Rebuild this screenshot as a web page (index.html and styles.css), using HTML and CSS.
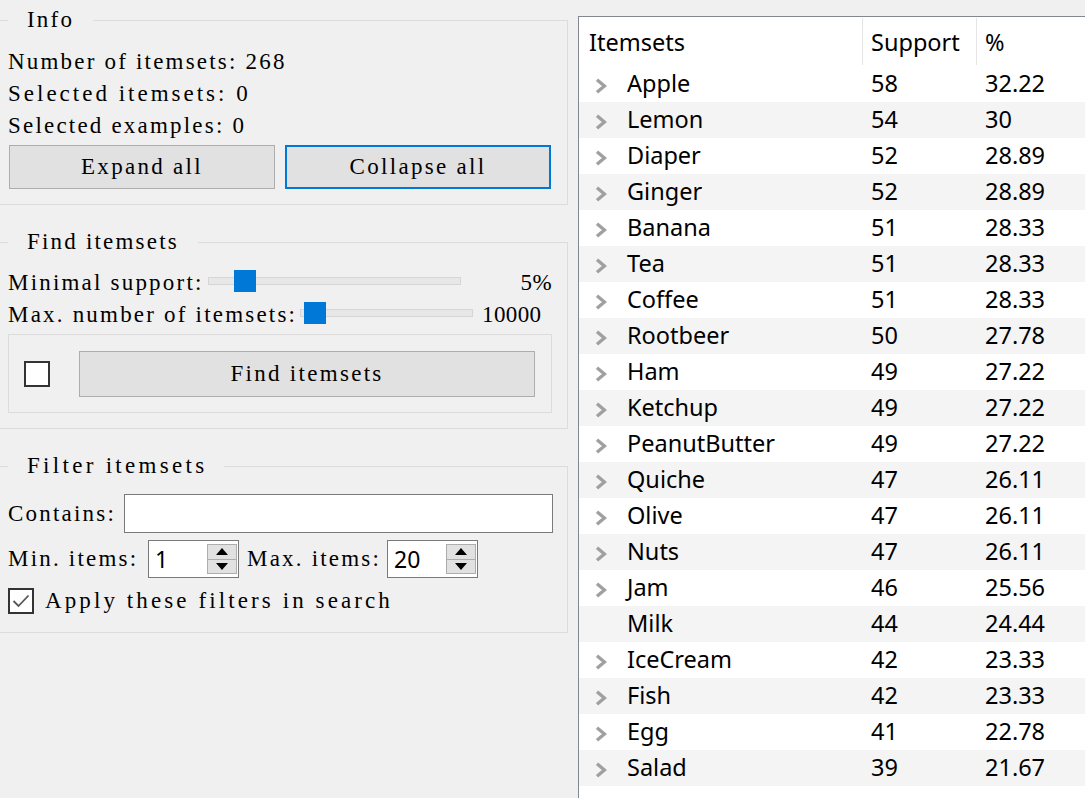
FILE: index.html
```html
<!DOCTYPE html>
<html>
<head>
<meta charset="utf-8">
<link rel="stylesheet" href="styles.css">
</head>
<body>
<div class="app">
  <div class="left">
    <fieldset class="group info">
      <legend>Info</legend>
      <div class="line">Number of itemsets: 268</div>
      <div class="line wide">Selected itemsets: 0</div>
      <div class="line">Selected examples: 0</div>
      <div class="btnrow">
        <button class="btn">Expand all</button>
        <button class="btn focus">Collapse all</button>
      </div>
    </fieldset>

    <fieldset class="group find">
      <legend>Find itemsets</legend>
      <div class="srow">
        <span class="lbl lbl-ms">Minimal support:</span>
        <div class="slider s1"><div class="groove"></div><div class="handle h1"></div></div>
        <span class="spacer"></span>
        <span class="sval">5%</span>
      </div>
      <div class="srow">
        <span class="lbl lbl-mx">Max. number of itemsets:</span>
        <div class="slider s2"><div class="groove"></div><div class="handle h2"></div></div>
        <span class="sval v2">10000</span>
      </div>
      <div class="frame">
        <span class="cb"></span>
        <button class="btn big">Find itemsets</button>
      </div>
    </fieldset>

    <fieldset class="group filter">
      <legend class="wide">Filter itemsets</legend>
      <div class="frow">
        <span class="lbl lbl-ct">Contains:</span>
        <div class="input"></div>
      </div>
      <div class="frow spinrow">
        <span class="lbl lbl-min">Min. items:</span>
        <div class="spin">
          <span class="spinval">1</span>
          <div class="spinbtns">
            <div class="sb up"><svg width="12" height="7" viewBox="0 0 12 7"><path d="M6 0 L12 7 L0 7 Z" fill="#000"/></svg></div>
            <div class="sb down"><svg width="12" height="7" viewBox="0 0 12 7"><path d="M0 0 L12 0 L6 7 Z" fill="#000"/></svg></div>
          </div>
        </div>
        <span class="lbl lbl-max">Max. items:</span>
        <div class="spin">
          <span class="spinval">20</span>
          <div class="spinbtns">
            <div class="sb up"><svg width="12" height="7" viewBox="0 0 12 7"><path d="M6 0 L12 7 L0 7 Z" fill="#000"/></svg></div>
            <div class="sb down"><svg width="12" height="7" viewBox="0 0 12 7"><path d="M0 0 L12 0 L6 7 Z" fill="#000"/></svg></div>
          </div>
        </div>
      </div>
      <div class="frow applyrow">
        <span class="cb checked"><svg width="22" height="22" viewBox="0 0 22 22"><path d="M3.5 11 L8.5 16 L18.5 5.5" fill="none" stroke="#555" stroke-width="1.8"/></svg></span>
        <span class="lbl applytxt">Apply these filters in search</span>
      </div>
    </fieldset>
  </div>

  <div class="right">
    <table class="tree">
      <thead>
        <tr><th class="c1">Itemsets</th><th class="c2">Support</th><th class="c3">%</th></tr>
      </thead>
      <tbody>
        <tr><td class="name"><span class="arr"><svg width="12" height="16" viewBox="0 0 12 16"><path d="M2 1.8 L9.4 8 L2 14.2" fill="none" stroke="#a0a0a0" stroke-width="3.4"/></svg></span>Apple</td><td>58</td><td>32.22</td></tr>
        <tr><td class="name"><span class="arr"><svg width="12" height="16" viewBox="0 0 12 16"><path d="M2 1.8 L9.4 8 L2 14.2" fill="none" stroke="#a0a0a0" stroke-width="3.4"/></svg></span>Lemon</td><td>54</td><td>30</td></tr>
        <tr><td class="name"><span class="arr"><svg width="12" height="16" viewBox="0 0 12 16"><path d="M2 1.8 L9.4 8 L2 14.2" fill="none" stroke="#a0a0a0" stroke-width="3.4"/></svg></span>Diaper</td><td>52</td><td>28.89</td></tr>
        <tr><td class="name"><span class="arr"><svg width="12" height="16" viewBox="0 0 12 16"><path d="M2 1.8 L9.4 8 L2 14.2" fill="none" stroke="#a0a0a0" stroke-width="3.4"/></svg></span>Ginger</td><td>52</td><td>28.89</td></tr>
        <tr><td class="name"><span class="arr"><svg width="12" height="16" viewBox="0 0 12 16"><path d="M2 1.8 L9.4 8 L2 14.2" fill="none" stroke="#a0a0a0" stroke-width="3.4"/></svg></span>Banana</td><td>51</td><td>28.33</td></tr>
        <tr><td class="name"><span class="arr"><svg width="12" height="16" viewBox="0 0 12 16"><path d="M2 1.8 L9.4 8 L2 14.2" fill="none" stroke="#a0a0a0" stroke-width="3.4"/></svg></span>Tea</td><td>51</td><td>28.33</td></tr>
        <tr><td class="name"><span class="arr"><svg width="12" height="16" viewBox="0 0 12 16"><path d="M2 1.8 L9.4 8 L2 14.2" fill="none" stroke="#a0a0a0" stroke-width="3.4"/></svg></span>Coffee</td><td>51</td><td>28.33</td></tr>
        <tr><td class="name"><span class="arr"><svg width="12" height="16" viewBox="0 0 12 16"><path d="M2 1.8 L9.4 8 L2 14.2" fill="none" stroke="#a0a0a0" stroke-width="3.4"/></svg></span>Rootbeer</td><td>50</td><td>27.78</td></tr>
        <tr><td class="name"><span class="arr"><svg width="12" height="16" viewBox="0 0 12 16"><path d="M2 1.8 L9.4 8 L2 14.2" fill="none" stroke="#a0a0a0" stroke-width="3.4"/></svg></span>Ham</td><td>49</td><td>27.22</td></tr>
        <tr><td class="name"><span class="arr"><svg width="12" height="16" viewBox="0 0 12 16"><path d="M2 1.8 L9.4 8 L2 14.2" fill="none" stroke="#a0a0a0" stroke-width="3.4"/></svg></span>Ketchup</td><td>49</td><td>27.22</td></tr>
        <tr><td class="name"><span class="arr"><svg width="12" height="16" viewBox="0 0 12 16"><path d="M2 1.8 L9.4 8 L2 14.2" fill="none" stroke="#a0a0a0" stroke-width="3.4"/></svg></span>PeanutButter</td><td>49</td><td>27.22</td></tr>
        <tr><td class="name"><span class="arr"><svg width="12" height="16" viewBox="0 0 12 16"><path d="M2 1.8 L9.4 8 L2 14.2" fill="none" stroke="#a0a0a0" stroke-width="3.4"/></svg></span>Quiche</td><td>47</td><td>26.11</td></tr>
        <tr><td class="name"><span class="arr"><svg width="12" height="16" viewBox="0 0 12 16"><path d="M2 1.8 L9.4 8 L2 14.2" fill="none" stroke="#a0a0a0" stroke-width="3.4"/></svg></span>Olive</td><td>47</td><td>26.11</td></tr>
        <tr><td class="name"><span class="arr"><svg width="12" height="16" viewBox="0 0 12 16"><path d="M2 1.8 L9.4 8 L2 14.2" fill="none" stroke="#a0a0a0" stroke-width="3.4"/></svg></span>Nuts</td><td>47</td><td>26.11</td></tr>
        <tr><td class="name"><span class="arr"><svg width="12" height="16" viewBox="0 0 12 16"><path d="M2 1.8 L9.4 8 L2 14.2" fill="none" stroke="#a0a0a0" stroke-width="3.4"/></svg></span>Jam</td><td>46</td><td>25.56</td></tr>
        <tr><td class="name"><span class="arr"></span>Milk</td><td>44</td><td>24.44</td></tr>
        <tr><td class="name"><span class="arr"><svg width="12" height="16" viewBox="0 0 12 16"><path d="M2 1.8 L9.4 8 L2 14.2" fill="none" stroke="#a0a0a0" stroke-width="3.4"/></svg></span>IceCream</td><td>42</td><td>23.33</td></tr>
        <tr><td class="name"><span class="arr"><svg width="12" height="16" viewBox="0 0 12 16"><path d="M2 1.8 L9.4 8 L2 14.2" fill="none" stroke="#a0a0a0" stroke-width="3.4"/></svg></span>Fish</td><td>42</td><td>23.33</td></tr>
        <tr><td class="name"><span class="arr"><svg width="12" height="16" viewBox="0 0 12 16"><path d="M2 1.8 L9.4 8 L2 14.2" fill="none" stroke="#a0a0a0" stroke-width="3.4"/></svg></span>Egg</td><td>41</td><td>22.78</td></tr>
        <tr><td class="name"><span class="arr"><svg width="12" height="16" viewBox="0 0 12 16"><path d="M2 1.8 L9.4 8 L2 14.2" fill="none" stroke="#a0a0a0" stroke-width="3.4"/></svg></span>Salad</td><td>39</td><td>21.67</td></tr>
      </tbody>
    </table>
  </div>
</div>
</body>
</html>
```

FILE: styles.css
```css
html, body {
  margin: 0;
  padding: 0;
  background: #f0f0f0;
  overflow: hidden;
}
.app {
  display: flex;
  width: 1085px;
  height: 798px;
}
.left {
  width: 578px;
  flex: none;
  font-family: "Liberation Serif", serif;
  font-size: 23px;
  letter-spacing: 2.2px;
  color: #000;
}
.wide { letter-spacing: 3px; }
.group {
  margin: 0 0 0 -1px;
  width: 569px;
  box-sizing: border-box;
  border: 1px solid #dcdcdc;
  padding: 0 8px;
  min-width: 0;
}
.group legend {
  padding: 0 19px;
  margin: 0;
  line-height: 32px;
  height: 32px;
}
.group legend.wide { letter-spacing: 3.3px; padding-right: 17px; }
.info {
  margin-top: 4px;
  padding-top: 10px;
  padding-bottom: 15px;
}
.line {
  height: 32px;
  line-height: 32px;
  white-space: nowrap;
}
.btnrow {
  display: grid;
  grid-template-columns: 266px 266px;
  column-gap: 10px;
  margin: 3px 0 0 1px;
}
.btn {
  font-family: "Liberation Serif", serif;
  font-size: 23px;
  letter-spacing: 2.3px;
  color: #000;
  background: #e1e1e1;
  border: 1px solid #adadad;
  height: 44px;
  padding: 0;
  margin: 0;
}
.btn.focus {
  border: 2px solid #0078d7;
}
.find {
  margin-top: 21px;
  padding-top: 9px;
  padding-bottom: 15px;
}
.srow {
  display: flex;
  align-items: center;
  height: 32px;
  width: 544px;
  white-space: nowrap;
}
.lbl { flex: none; }
.lbl-ms { width: 200px; }
.lbl-mx { width: 292px; }
.slider {
  position: relative;
  height: 22px;
  margin-bottom: 5px;
  flex: none;
}
.s1 { width: 253px; }
.s2 { width: 173px; }
.groove {
  margin-top: 7px;
  height: 6px;
  background: #e7e7e7;
  border: 1px solid #d6d6d6;
}
.handle {
  position: absolute;
  top: 0;
  width: 22px;
  height: 22px;
  background: #0078d7;
}
.h1 { left: 26px; }
.h2 { left: 4px; }
.spacer { flex: 1; }
.sval { letter-spacing: 0.4px; }
.v2 { margin-left: 9px; }
.frame {
  margin-top: 3px;
  border: 1px solid #dcdcdc;
  display: flex;
  align-items: center;
  width: 544px;
  box-sizing: border-box;
  padding: 16px 16px 15px 15px;
}
.cb {
  width: 26px;
  height: 26px;
  box-sizing: border-box;
  border: 2px solid #333;
  background: #fff;
  flex: none;
  display: flex;
  align-items: center;
  justify-content: center;
}
.btn.big {
  flex: 1;
  margin-left: 29px;
  height: 46px;
}
.filter {
  margin-top: 21px;
  padding-top: 12px;
  padding-bottom: 18px;
}
.frow {
  display: flex;
  align-items: center;
  white-space: nowrap;
}
.lbl-ct { width: 108px; }
.lbl-min { width: 132px; }
.lbl-max { width: 132px; margin-left: 8px; }
.input {
  width: 429px;
  height: 39px;
  box-sizing: border-box;
  border: 1px solid #7a7a7a;
  background: #fff;
  margin-left: 8px;
}
.spinrow {
  margin-top: 7px;
}
.spin {
  width: 91px;
  height: 38px;
  box-sizing: border-box;
  border: 1px solid #7a7a7a;
  background: #fff;
  margin-left: 8px;
  display: flex;
  align-items: center;
  justify-content: space-between;
  padding: 0 1px 0 6px;
  flex: none;
}
.spinval {
  font-family: "Noto Sans", "Open Sans", sans-serif;
  font-size: 23px;
  letter-spacing: 0;
}
.spinbtns {
  display: flex;
  flex-direction: column;
  width: 30px;
  height: 30px;
}
.sb {
  flex: 1;
  background: #e1e1e1;
  border: 1px solid #adadad;
  display: flex;
  align-items: center;
  justify-content: center;
}
.sb.up { border-bottom: none; }
.applyrow {
  margin-top: 10px;
}
.applytxt {
  margin-left: 11px;
  letter-spacing: 3.1px;
}
.right {
  flex: 1;
  margin-top: 16px;
  background: #fff;
  border-left: 1px solid #828790;
  border-top: 1px solid #828790;
  font-family: "Noto Sans", "Open Sans", sans-serif;
  font-size: 23.5px;
  color: #000;
}
.tree {
  border-collapse: collapse;
  width: 100%;
  table-layout: fixed;
}
.tree th {
  font-weight: normal;
  text-align: left;
  height: 49px;
  padding: 0;
  vertical-align: middle;
}
.tree th.c1 { width: 284px; padding-left: 10px; box-sizing: border-box; }
.tree th.c2 { width: 114px; padding-left: 8px; box-sizing: border-box; }
.tree th.c3 { padding-left: 8px; }
.tree th.c1, .tree th.c2 {
  background-image: linear-gradient(#e5e5e5, #e5e5e5);
  background-size: 1px 47px;
  background-position: right center;
  background-repeat: no-repeat;
}
.tree td {
  height: 36px;
  padding: 0 0 2px 8px;
  box-sizing: border-box;
  white-space: nowrap;
  line-height: 34px;
}
.tree td.name {
  padding-left: 16px;
}
.arr {
  display: inline-block;
  width: 12px;
  height: 16px;
  margin-right: 20px;
  vertical-align: -2px;
}
.arr svg { display: block; }
.tree tbody tr:nth-child(even) td {
  background: #f4f4f4;
}
```
